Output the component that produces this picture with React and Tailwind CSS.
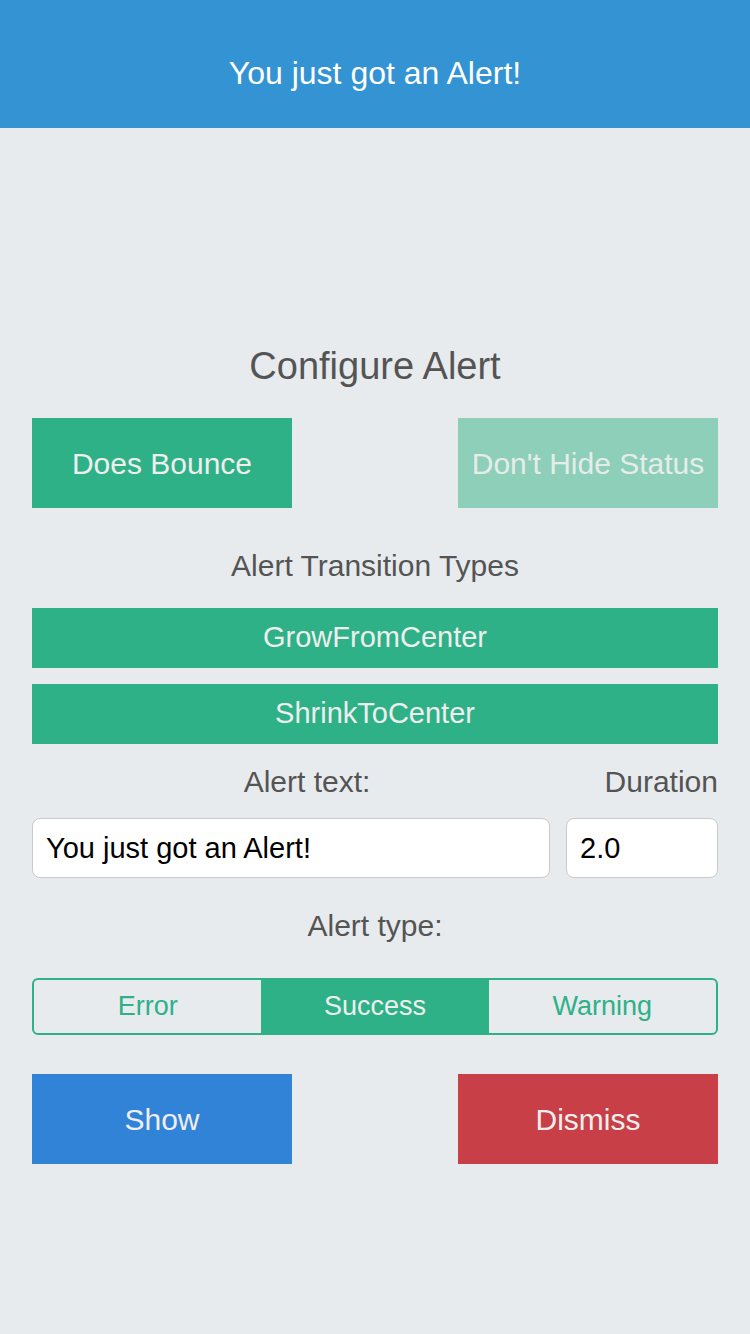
import { useState } from 'react';

const font = { fontFamily: '"Liberation Sans", Arial, sans-serif' };

const App = () => {
  const [alertText, setAlertText] = useState('You just got an Alert!');
  const [duration, setDuration] = useState('2.0');
  const [type, setType] = useState('Success');

  const types = ['Error', 'Success', 'Warning'];

  return (
    <div className="min-h-[1334px] w-[750px] bg-[#e8ebee]" style={font}>
      <header className="flex h-[128px] items-center justify-center bg-[#3393d3] pt-[18px]">
        <h1 className="text-[32px] leading-none text-white">You just got an Alert!</h1>
      </header>

      <main className="px-[32px]">
        <h2 className="mt-[219px] text-center text-[38px] leading-none text-[#545454]">Configure Alert</h2>

        <div className="mt-[33px] flex justify-between">
          <button className="flex h-[90px] w-[260px] items-center justify-center bg-[#2eb187] text-[30px] text-[#eeeeee]">
            Does Bounce
          </button>
          <button className="flex h-[90px] w-[260px] items-center justify-center bg-[#8dcfb9] text-[30px] text-[#e6ece9]">
            Don't Hide Status
          </button>
        </div>

        <p className="mt-[43px] text-center text-[30px] leading-none text-[#545454]">Alert Transition Types</p>

        <div className="mt-[27px] space-y-[16px]">
          <button className="flex h-[60px] w-full items-center justify-center bg-[#2eb187] text-[29px] text-[#eeeeee]">
            GrowFromCenter
          </button>
          <button className="flex h-[60px] w-full items-center justify-center bg-[#2eb187] text-[29px] text-[#eeeeee]">
            ShrinkToCenter
          </button>
        </div>

        <div className="mt-[23px] flex text-[30px] leading-none text-[#545454]">
          <span className="w-[518px] pl-[32px] text-center">Alert text:</span>
          <span className="flex-1 text-right">Duration</span>
        </div>

        <div className="mt-[21px] flex gap-[16px]">
          <input
            type="text"
            value={alertText}
            onChange={(e) => setAlertText(e.target.value)}
            className="h-[60px] w-[518px] rounded-[8px] border border-[#c9cacc] bg-white px-[13px] text-[29px] text-black outline-none"
            style={font}
          />
          <input
            type="text"
            value={duration}
            onChange={(e) => setDuration(e.target.value)}
            className="h-[60px] w-[152px] rounded-[8px] border border-[#c9cacc] bg-white px-[13px] text-[29px] text-black outline-none"
            style={font}
          />
        </div>

        <p className="mt-[33px] text-center text-[30px] leading-none text-[#545454]">Alert type:</p>

        <div className="mt-[37px] flex h-[57px] overflow-hidden rounded-[6px] border-2 border-[#2eb187]">
          {types.map((t) => (
            <button
              key={t}
              onClick={() => setType(t)}
              className={
                type === t
                  ? 'flex flex-1 items-center justify-center bg-[#2eb187] text-[27px] text-[#eeeeee]'
                  : 'flex flex-1 items-center justify-center text-[27px] text-[#2eb187]'
              }
            >
              {t}
            </button>
          ))}
        </div>

        <div className="mt-[39px] flex justify-between">
          <button className="flex h-[90px] w-[260px] items-center justify-center bg-[#3183d8] text-[30px] text-[#eeeeee]">
            Show
          </button>
          <button className="flex h-[90px] w-[260px] items-center justify-center bg-[#c93f47] text-[30px] text-[#eeeeee]">
            Dismiss
          </button>
        </div>
      </main>
    </div>
  );
};

export default App;
